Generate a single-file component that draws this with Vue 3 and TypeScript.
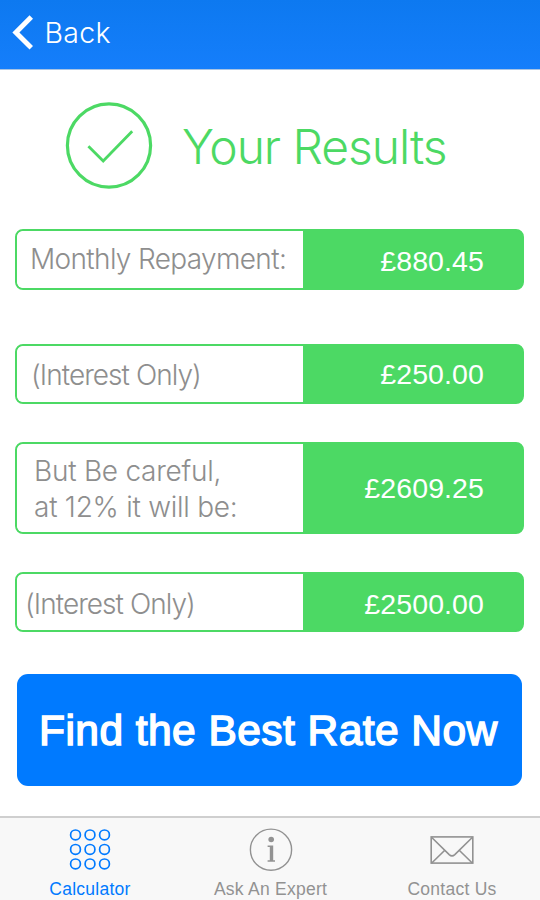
<script setup lang="ts">
interface ResultRow {
  label: string[]
  value: string
  kind: string
}

const rows: ResultRow[] = [
  { label: ['Monthly Repayment:'], value: '£880.45', kind: 'monthly' },
  { label: ['(Interest Only)'], value: '£250.00', kind: 'interest' },
  { label: ['But Be careful,', 'at 12% it will be:'], value: '£2609.25', kind: 'warning' },
  { label: ['(Interest Only)'], value: '£2500.00', kind: 'warning-interest' },
]

const dots: number[] = [6.5, 21, 35.5]
</script>

<template>
  <div class="screen">
    <header class="nav">
      <svg class="chevron" width="22" height="36" viewBox="0 0 22 36">
        <path d="M20.3 3 L4.9 18.4 L20.3 33.8" fill="none" stroke="#fff" stroke-width="5" />
      </svg>
      <span class="back">Back</span>
    </header>

    <main class="content">
      <div class="heading">
        <svg class="check" width="88" height="88" viewBox="0 0 88 88">
          <circle cx="44" cy="43.5" r="41.6" fill="none" stroke="#4cd964" stroke-width="3.2" />
          <path d="M23.4 44.2 L38.2 59 L67.2 29.2" fill="none" stroke="#4cd964" stroke-width="2.8" />
        </svg>
        <h1 class="title">Your Results</h1>
      </div>

      <section v-for="row in rows" :key="row.kind" class="row" :class="row.kind">
        <div class="label">
          <span v-for="line in row.label" :key="line" class="line">{{ line }}</span>
        </div>
        <div class="value">{{ row.value }}</div>
      </section>

      <button class="cta" type="button">Find the Best Rate Now</button>
    </main>

    <footer class="tabs">
      <div class="tab calculator">
        <svg class="icon" width="42" height="44" viewBox="0 0 42 44">
          <g fill="none" stroke="#007aff" stroke-width="1.7">
            <template v-for="y in dots" :key="y">
              <circle v-for="x in dots" :key="x" :cx="x" :cy="y + 0.4" r="4.9" />
            </template>
          </g>
        </svg>
        <span class="caption">Calculator</span>
      </div>
      <div class="tab expert">
        <svg class="icon" width="44" height="44" viewBox="0 0 44 44">
          <circle cx="22" cy="21.7" r="20.6" fill="none" stroke="#929292" stroke-width="1.4" />
          <circle cx="22.2" cy="11.5" r="2.8" fill="#929292" />
          <path d="M18.6 17.4 H24.2 V32.2 H26 V33.8 H18.6 V32.2 H20.8 V19 H18.6 Z" fill="#929292" />
        </svg>
        <span class="caption">Ask An Expert</span>
      </div>
      <div class="tab contact">
        <svg class="icon" width="44" height="44" viewBox="0 0 44 44">
          <g fill="none" stroke="#929292" stroke-width="1.6">
            <rect x="1.2" y="8.9" width="41.6" height="26.2" />
            <path d="M1.5 9.2 L19.2 26.6 Q22 29.2 24.8 26.6 L42.5 9.2" />
            <path d="M1.5 35.2 L14.8 22.2 M42.5 35.2 L29.2 22.2" />
          </g>
        </svg>
        <span class="caption">Contact Us</span>
      </div>
    </footer>
  </div>
</template>

<style>
body {
  margin: 0;
  background: #fff;
}
</style>

<style scoped>
.screen {
  display: flex;
  flex-direction: column;
  width: 540px;
  height: 900px;
  overflow: hidden;
  background: #fff;
  font-family: Inter, "Liberation Sans", sans-serif;
  font-weight: 300;
}

.nav {
  display: flex;
  box-sizing: border-box;
  height: 70px;
  padding: 14px 0 0 11px;
  border-bottom: 1px solid #a9c4e4;
  background: linear-gradient(#0d79f0, #157efb);
  color: #fff;
}

.back {
  margin-left: 11.5px;
  font-size: 28.5px;
  letter-spacing: 0.3px;
  line-height: 37px;
}

.content {
  display: flex;
  flex-direction: column;
  height: 746px;
}

.heading {
  display: flex;
  align-items: center;
  height: 88px;
  margin: 32px 0 39px 65px;
}

.title {
  margin: 1px 0 0 29px;
  color: #4cd964;
  font-size: 48px;
  font-weight: 280;
  letter-spacing: -1.05px;
  line-height: 60px;
  white-space: nowrap;
}

.row {
  display: flex;
  flex: none;
  box-sizing: border-box;
  width: 509px;
  height: 61px;
  margin-left: 15px;
  overflow: hidden;
  border: 2px solid #4cd964;
  border-radius: 8px;
  background: linear-gradient(#4cd964, #4cd964) right / 50% 100% no-repeat border-box;
}

.label {
  display: flex;
  flex-direction: column;
  justify-content: center;
  box-sizing: border-box;
  width: 286px;
  background: #fff;
  border-radius: 6px 0 0 6px;
  color: #8e8e8e;
  font-size: 28px;
  font-weight: 260;
  line-height: 36px;
  white-space: nowrap;
}

.value {
  display: flex;
  flex: 1;
  align-items: center;
  justify-content: flex-end;
  padding: 3px 38px 0 0;
  background: #4cd964;
  color: #fff;
  font-family: "Liberation Sans", sans-serif;
  font-size: 28.5px;
  font-weight: 400;
  letter-spacing: 0.1px;
}

.monthly .label {
  padding: 0 0 2px 13px;
  letter-spacing: -0.65px;
}

.interest {
  height: 60px;
  margin-top: 54px;
}

.interest .label {
  padding: 1px 0 0 14px;
  letter-spacing: -0.95px;
}

.interest .value {
  padding-top: 1px;
}

.warning {
  height: 92px;
  margin-top: 38px;
}

.warning .label {
  padding: 2px 0 0 17px;
  letter-spacing: -0.25px;
}

.warning .value {
  padding-top: 1px;
}

.warning-interest {
  height: 60px;
  margin-top: 38px;
}

.warning-interest .label {
  padding: 3px 0 0 8px;
  letter-spacing: -0.95px;
}

.warning-interest .value {
  padding-top: 5px;
}

.cta {
  flex: none;
  width: 505px;
  height: 112px;
  margin: 42px 0 0 17.4px;
  padding: 2px 3px 0 0;
  border: 0;
  border-radius: 11px;
  background: #007aff;
  color: #fff;
  font-family: "Liberation Sans", sans-serif;
  font-size: 42.5px;
  font-weight: 400;
  letter-spacing: 0.45px;
  white-space: nowrap;
  -webkit-text-stroke: 1.5px #fff;
}

.tabs {
  display: flex;
  box-sizing: border-box;
  height: 84px;
  border-top: 2px solid #cfcfcf;
  background: #f8f8f8;
}

.tab {
  display: flex;
  flex: none;
  flex-direction: column;
  align-items: center;
  width: 181px;
  padding-top: 10px;
  color: #929292;
  font-family: "Liberation Sans", sans-serif;
  font-weight: 400;
}

.icon {
  flex: none;
}

.caption {
  margin-top: 6px;
  font-size: 17.5px;
  letter-spacing: 0.25px;
  line-height: 22px;
  white-space: nowrap;
}

.calculator {
  width: 180px;
  color: #007aff;
}

.contact {
  width: 182px;
}
</style>
